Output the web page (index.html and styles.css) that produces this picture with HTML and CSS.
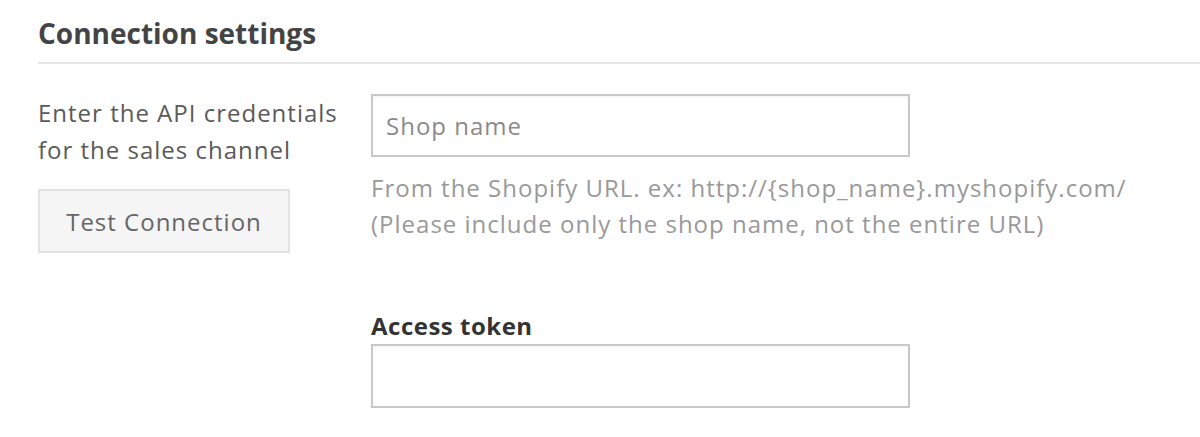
FILE: index.html
```html
<!DOCTYPE html>
<html>
<head>
<meta charset="utf-8">
<link rel="stylesheet" href="styles.css">
</head>
<body>
<div class="page">
  <h2 class="section-title">Connection settings</h2>
  <div class="row">
    <div class="side">
      <p class="side-text">Enter the API credentials for the sales channel</p>
      <button class="btn">Test Connection</button>
    </div>
    <div class="fields">
      <div class="field">
        <input class="input" type="text" placeholder="Shop name">
        <p class="help">From the Shopify URL. ex: http://{shop_name}.myshopify.com/<br>(Please include only the shop name, not the entire URL)</p>
      </div>
      <div class="field field-token">
        <label class="label">Access token</label>
        <input class="input" type="text">
      </div>
    </div>
  </div>
</div>
</body>
</html>
```

FILE: styles.css
```css
html, body {
  margin: 0;
  padding: 0;
  background: #fff;
}
body {
  font-family: "Open Sans", "Liberation Sans", sans-serif;
  font-size: 24px;
  letter-spacing: 1px;
  color: #555;
  overflow: hidden;
}
.page {
  padding-left: 38px;
}
.section-title {
  margin: 0;
  padding-top: 14px;
  height: 48px;
  line-height: 38px;
  font-size: 28px;
  letter-spacing: 0;
  font-weight: 700;
  color: #444;
  border-bottom: 2px solid #e6e6e6;
  box-sizing: content-box;
}
.row {
  display: flex;
  padding-top: 30px;
}
.side {
  width: 333px;
  flex: none;
}
.side-text {
  margin: 0;
  line-height: 37px;
  color: #5a5a5a;
  width: 310px;
}
.btn {
  margin-top: 21px;
  width: 252px;
  height: 64px;
  background: #f5f5f5;
  border: 2px solid #e2e2e2;
  border-radius: 0;
  font-family: inherit;
  font-size: 24px;
  letter-spacing: 1px;
  color: #666;
  padding: 0;
}
.fields {
  display: flex;
  flex-direction: column;
}
.input {
  display: block;
  box-sizing: border-box;
  width: 539px;
  height: 63px;
  border: 2px solid #c8c8c8;
  border-radius: 0;
  box-shadow: inset 0 2px 2px rgba(0,0,0,0.04);
  padding: 0 13px;
  font-family: inherit;
  font-size: 24px;
  letter-spacing: 1px;
  color: #555;
  outline: none;
}
.input::placeholder {
  color: #8a8a8a;
}
.help {
  margin: 13px 0 0;
  line-height: 36px;
  color: #999;
  white-space: nowrap;
}
.field-token {
  margin-top: 66px;
}
.label {
  display: block;
  line-height: 36px;
  font-weight: 700;
  letter-spacing: 0.5px;
  color: #333;
}
.field-token .input {
  height: 64px;
}
```
